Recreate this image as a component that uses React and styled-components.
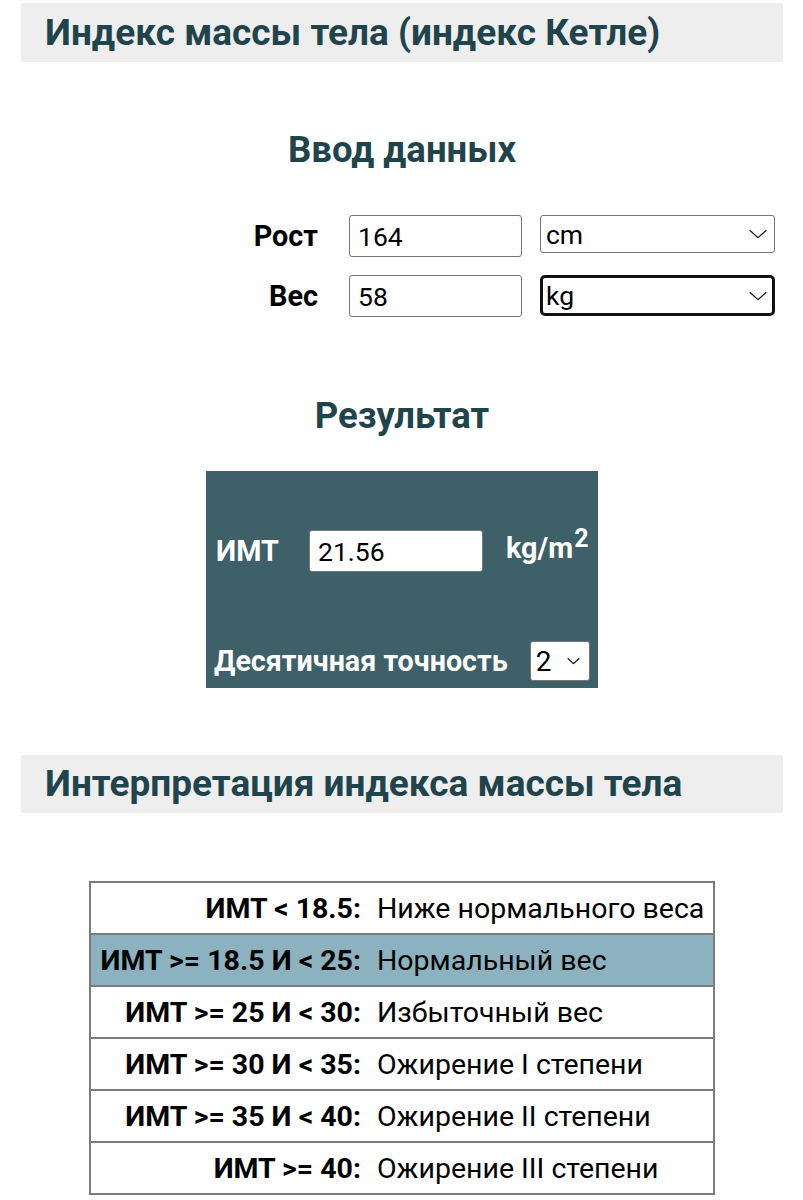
import { useState } from "react";
import styled, { createGlobalStyle } from "styled-components";

const GlobalStyle = createGlobalStyle`
  body {
    margin: 0;
    background: #fff;
    font-family: Roboto, "Liberation Sans", sans-serif;
    color: #000;
  }
`;

const Page = styled.div`
  padding: 3px 20px 0 21px;
`;

const SectionBar = styled.h1`
  margin: 0;
  background: #eeeeee;
  color: #1f444c;
  font-size: 37px;
  font-weight: 700;
  line-height: ${(p) => p.$lh || "58px"};
  padding: 0 24px;
  white-space: nowrap;
`;

const SubTitle = styled.h2`
  margin: 0;
  text-align: center;
  color: #1f444c;
  font-size: 36.5px;
  font-weight: 700;
`;

const InputSection = styled.section`
  padding-top: 66px;
`;

const FormGrid = styled.div`
  display: grid;
  grid-template-columns: 310px 173px 235px;
  column-gap: 18px;
  row-gap: 18px;
  margin-top: 44px;
  align-items: start;
`;

const Label = styled.label`
  font-size: 28.8px;
  font-weight: 700;
  text-align: right;
  padding-right: 13px;
  line-height: 42px;
`;

const TextInput = styled.input`
  box-sizing: border-box;
  width: ${(p) => p.$width || "173px"};
  height: ${(p) => p.$height || "42px"};
  border: 1px solid #767676;
  border-radius: 3px;
  padding: 0 8px;
  font-family: Roboto, "Liberation Sans", sans-serif;
  font-size: 26.5px;
  color: #000;
  background: #fff;
  outline: none;
`;

const SelectWrap = styled.div`
  position: relative;
  width: ${(p) => p.$width || "235px"};
`;

const Select = styled.select`
  appearance: none;
  box-sizing: border-box;
  width: 100%;
  height: ${(p) => p.$height || "38px"};
  border: ${(p) => (p.$focused ? "3px solid #101010" : "1px solid #767676")};
  border-radius: ${(p) => (p.$focused ? "5px" : "3px")};
  padding: 0 ${(p) => (p.$focused ? "3px" : "5px")};
  font-family: Roboto, "Liberation Sans", sans-serif;
  font-size: ${(p) => p.$size || "26.5px"};
  color: #000;
  background: #fff;
  outline: none;
`;

const Chevron = styled.svg`
  position: absolute;
  right: ${(p) => p.$right || "8px"};
  top: 50%;
  transform: translateY(-50%);
  pointer-events: none;
`;

const ResultSection = styled.section`
  padding-top: 77px;
`;

const ResultBox = styled.div`
  width: 392px;
  height: 217px;
  box-sizing: border-box;
  margin: 34px auto 0;
  background: #3e6068;
  color: #fff;
  padding: 59px 8px 0 10px;
`;

const ResultRow = styled.div`
  display: flex;
  align-items: flex-start;
`;

const ResultLabel = styled.span`
  font-size: 28.8px;
  font-weight: 700;
  line-height: 42px;
  width: 93px;
`;

const Unit = styled.span`
  font-size: 28.8px;
  font-weight: 700;
  margin-left: 23px;
  line-height: 36px;
  white-space: nowrap;
  sup {
    font-size: 25px;
    vertical-align: 0;
    position: relative;
    top: -11px;
    margin-left: 1px;
  }
`;

const PrecisionRow = styled.div`
  display: flex;
  align-items: center;
  margin-top: 69px;
`;

const PrecisionLabel = styled.span`
  font-size: 28.7px;
  font-weight: 700;
  margin-left: -2px;
  margin-right: 22px;
  white-space: nowrap;
`;

const InterpSection = styled.section`
  padding-top: 67px;
`;

const Table = styled.table`
  border-collapse: collapse;
  width: 626px;
  margin: 68px auto 0;
  border: 2px solid #7a7a7a;
  font-size: 28.5px;
`;

const Row = styled.tr`
  background: ${(p) => (p.$active ? "#8bb2be" : "#fff")};
  border-top: 2px solid #7a7a7a;
`;

const RangeCell = styled.td`
  text-align: right;
  font-weight: 700;
  padding: 0 9px 0 8px;
  height: 50px;
  white-space: nowrap;
  width: 262px;
`;

const ClassCell = styled.td`
  text-align: left;
  padding: 0 8px 0 7px;
  white-space: nowrap;
`;

function ChevronIcon({ right, w = 18, h = 9 }) {
  return (
    <Chevron $right={right} width={w} height={h} viewBox={`0 0 ${w} ${h}`}>
      <path
        d={`M0.7 0.7 L${w / 2} ${h - 0.8} L${w - 0.7} 0.7`}
        fill="none"
        stroke="#1a1a1a"
        strokeWidth="1.3"
      />
    </Chevron>
  );
}

const ranges = [
  ["ИМТ < 18.5:", "Ниже нормального веса"],
  ["ИМТ >= 18.5 И < 25:", "Нормальный вес"],
  ["ИМТ >= 25 И < 30:", "Избыточный вес"],
  ["ИМТ >= 30 И < 35:", "Ожирение I степени"],
  ["ИМТ >= 35 И < 40:", "Ожирение II степени"],
  ["ИМТ >= 40:", "Ожирение III степени"],
];

export default function App() {
  const [height, setHeight] = useState("164");
  const [weight, setWeight] = useState("58");
  const bmi = (parseFloat(weight) / Math.pow(parseFloat(height) / 100, 2)).toFixed(2);

  return (
    <>
      <GlobalStyle />
      <Page>
        <SectionBar $lh="59px">Индекс массы тела (индекс Кетле)</SectionBar>

        <InputSection>
          <SubTitle>Ввод данных</SubTitle>
          <FormGrid>
            <Label>Рост</Label>
            <TextInput value={height} onChange={(e) => setHeight(e.target.value)} />
            <SelectWrap>
              <Select defaultValue="cm">
                <option value="cm">cm</option>
                <option value="m">m</option>
              </Select>
              <ChevronIcon right="8px" />
            </SelectWrap>

            <Label>Вес</Label>
            <TextInput value={weight} onChange={(e) => setWeight(e.target.value)} />
            <SelectWrap>
              <Select defaultValue="kg" $focused $height="41px">
                <option value="kg">kg</option>
                <option value="lb">lb</option>
              </Select>
              <ChevronIcon right="8px" />
            </SelectWrap>
          </FormGrid>
        </InputSection>

        <ResultSection>
          <SubTitle>Результат</SubTitle>
          <ResultBox>
            <ResultRow>
              <ResultLabel>ИМТ</ResultLabel>
              <TextInput $width="174px" $height="42px" value={bmi} readOnly />
              <Unit>
                kg/m<sup>2</sup>
              </Unit>
            </ResultRow>
            <PrecisionRow>
              <PrecisionLabel>Десятичная точность</PrecisionLabel>
              <SelectWrap $width="60px">
                <Select defaultValue="2" $height="40px" $size="28px">
                  <option value="1">1</option>
                  <option value="2">2</option>
                  <option value="3">3</option>
                </Select>
                <ChevronIcon right="10px" w={13} h={7} />
              </SelectWrap>
            </PrecisionRow>
          </ResultBox>
        </ResultSection>

        <InterpSection>
          <SectionBar>Интерпретация индекса массы тела</SectionBar>
          <Table>
            <tbody>
              {ranges.map(([range, label], i) => (
                <Row key={range} $active={i === 1}>
                  <RangeCell>{range}</RangeCell>
                  <ClassCell>{label}</ClassCell>
                </Row>
              ))}
            </tbody>
          </Table>
        </InterpSection>
      </Page>
    </>
  );
}
